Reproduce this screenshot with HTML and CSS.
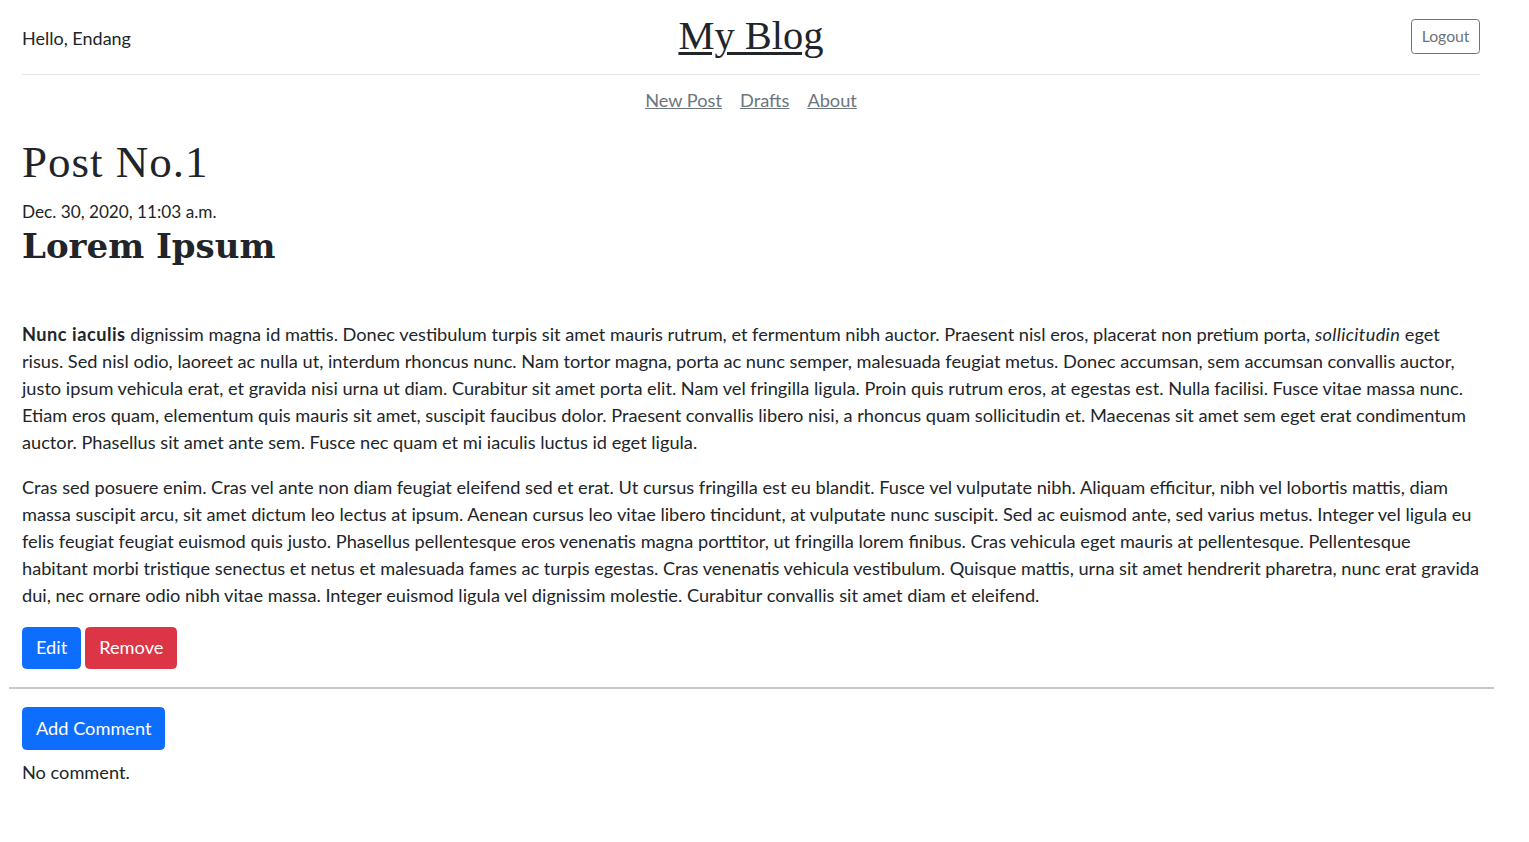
FILE: index.html
```html
<!DOCTYPE html>
<html lang="en">
<head>
<meta charset="utf-8">
<title>My Blog</title>
<link rel="stylesheet" href="styles.css">
</head>
<body>
<div class="page">
  <div class="container">
    <header class="blog-header">
      <div class="hdr-col hdr-left">Hello, Endang</div>
      <div class="hdr-col hdr-center"><a class="logo" href="#">My Blog</a></div>
      <div class="hdr-col hdr-right"><a class="btn-logout" href="#">Logout</a></div>
    </header>
    <nav class="nav">
      <a href="#">New Post</a>
      <a href="#">Drafts</a>
      <a href="#">About</a>
    </nav>
    <article class="post">
      <h1 class="post-title">Post No.1</h1>
      <div class="post-date">Dec. 30, 2020, 11:03 a.m.</div>
      <h2 class="post-heading">Lorem Ipsum</h2>
      <p>&nbsp;</p>
      <p><strong>Nunc iaculis</strong> dignissim magna id mattis. Donec vestibulum turpis sit amet mauris rutrum, et fermentum nibh auctor. Praesent nisl eros, placerat non pretium porta, <em>sollicitudin</em> eget risus. Sed nisl odio, laoreet ac nulla ut, interdum rhoncus nunc. Nam tortor magna, porta ac nunc semper, malesuada feugiat metus. Donec accumsan, sem accumsan convallis auctor, justo ipsum vehicula erat, et gravida nisi urna ut diam. Curabitur sit amet porta elit. Nam vel fringilla ligula. Proin quis rutrum eros, at egestas est. Nulla facilisi. Fusce vitae massa nunc. Etiam eros quam, elementum quis mauris sit amet, suscipit faucibus dolor. Praesent convallis libero nisi, a rhoncus quam sollicitudin et. Maecenas sit amet sem eget erat condimentum auctor. Phasellus sit amet ante sem. Fusce nec quam et mi iaculis luctus id eget ligula.</p>
      <p>Cras sed posuere enim. Cras vel ante non diam feugiat eleifend sed et erat. Ut cursus fringilla est eu blandit. Fusce vel vulputate nibh. Aliquam efficitur, nibh vel lobortis mattis, diam massa suscipit arcu, sit amet dictum leo lectus at ipsum. Aenean cursus leo vitae libero tincidunt, at vulputate nunc suscipit. Sed ac euismod ante, sed varius metus. Integer vel ligula eu felis feugiat feugiat euismod quis justo. Phasellus pellentesque eros venenatis magna porttitor, ut fringilla lorem finibus. Cras vehicula eget mauris at pellentesque. Pellentesque habitant morbi tristique senectus et netus et malesuada fames ac turpis egestas. Cras venenatis vehicula vestibulum. Quisque mattis, urna sit amet hendrerit pharetra, nunc erat gravida dui, nec ornare odio nibh vitae massa. Integer euismod ligula vel dignissim molestie. Curabitur convallis sit amet diam et eleifend.</p>
      <div class="actions">
        <a class="btn btn-primary" href="#">Edit</a>
        <a class="btn btn-danger" href="#">Remove</a>
      </div>
    </article>
  </div>
  <hr class="divider">
  <div class="container">
    <section class="comments">
      <a class="btn btn-primary" href="#">Add Comment</a>
      <p class="no-comment">No comment.</p>
    </section>
  </div>
</div>
</body>
</html>
```
FILE: styles.css
```css
* { box-sizing: border-box; }
html, body { margin: 0; padding: 0; background: #fff; }
body {
  font-family: Lato, "Liberation Sans", sans-serif;
  font-size: 18.2px;
  line-height: 27px;
  color: #212529;
}
.page {
  padding: 0 35px 0 9px;
}
.container {
  padding: 0 14px 0 13px;
}

/* header */
.blog-header {
  display: flex;
  align-items: center;
  justify-content: space-between;
  padding: 16px 0 17px;
  border-bottom: 1px solid #e5e5e5;
  line-height: 1;
}
.hdr-col { flex: 1 1 0; }
.hdr-left { padding-top: 4px; font-size: 18px; }
.hdr-center { text-align: center; }
.hdr-right { display: flex; justify-content: flex-end; }
.logo {
  font-family: "Liberation Serif", "Times New Roman", serif;
  font-size: 40.5px;
  color: #212529;
  text-decoration: underline;
  text-decoration-thickness: 3px;
  text-underline-offset: 3px;
}
.btn-logout {
  display: inline-block;
  font-size: 15.75px;
  line-height: 23.6px;
  padding: 4.5px 9.5px;
  border: 1px solid #6c757d;
  border-radius: 3.6px;
  color: #6c757d;
  text-decoration: none;
}

/* nav */
.nav {
  display: flex;
  justify-content: center;
  padding-top: 3px;
}
.nav a {
  padding: 9px;
  color: #6c757d;
  text-decoration: underline;
  line-height: 27px;
}

/* post */
.post-title {
  font-family: "Liberation Serif", "Times New Roman", serif;
  font-weight: normal;
  font-size: 45px;
  line-height: 54px;
  letter-spacing: 1px;
  margin: 12px 0 9px;
}
.post-date {
  font-size: 17.2px;
  line-height: 27px;
}
.post-heading {
  font-family: "DejaVu Serif", Georgia, serif;
  font-weight: bold;
  font-size: 34px;
  line-height: 41px;
  margin: 1px 0 9px;
}
.post p {
  margin: 0 0 18px;
}
.post strong { letter-spacing: 0.5px; }
.post em { letter-spacing: 0.35px; }
.actions {
  display: flex;
  gap: 4px;
  margin-bottom: 18px;
}

/* buttons */
.btn {
  display: inline-block;
  font-size: 18.2px;
  line-height: 27px;
  padding: 6.75px 13px;
  border: 1px solid transparent;
  border-radius: 4.5px;
  color: #fff;
  text-decoration: none;
}
.btn-primary { background: #0d6efd; border-color: #0d6efd; }
.btn-danger { background: #dc3545; border-color: #dc3545; }

.divider {
  height: 2px;
  border: 0;
  background: #c8c8c8;
  margin: 0 0 18px;
}

.comments .btn { margin-bottom: 9px; }
.no-comment { margin: 0; }
```
